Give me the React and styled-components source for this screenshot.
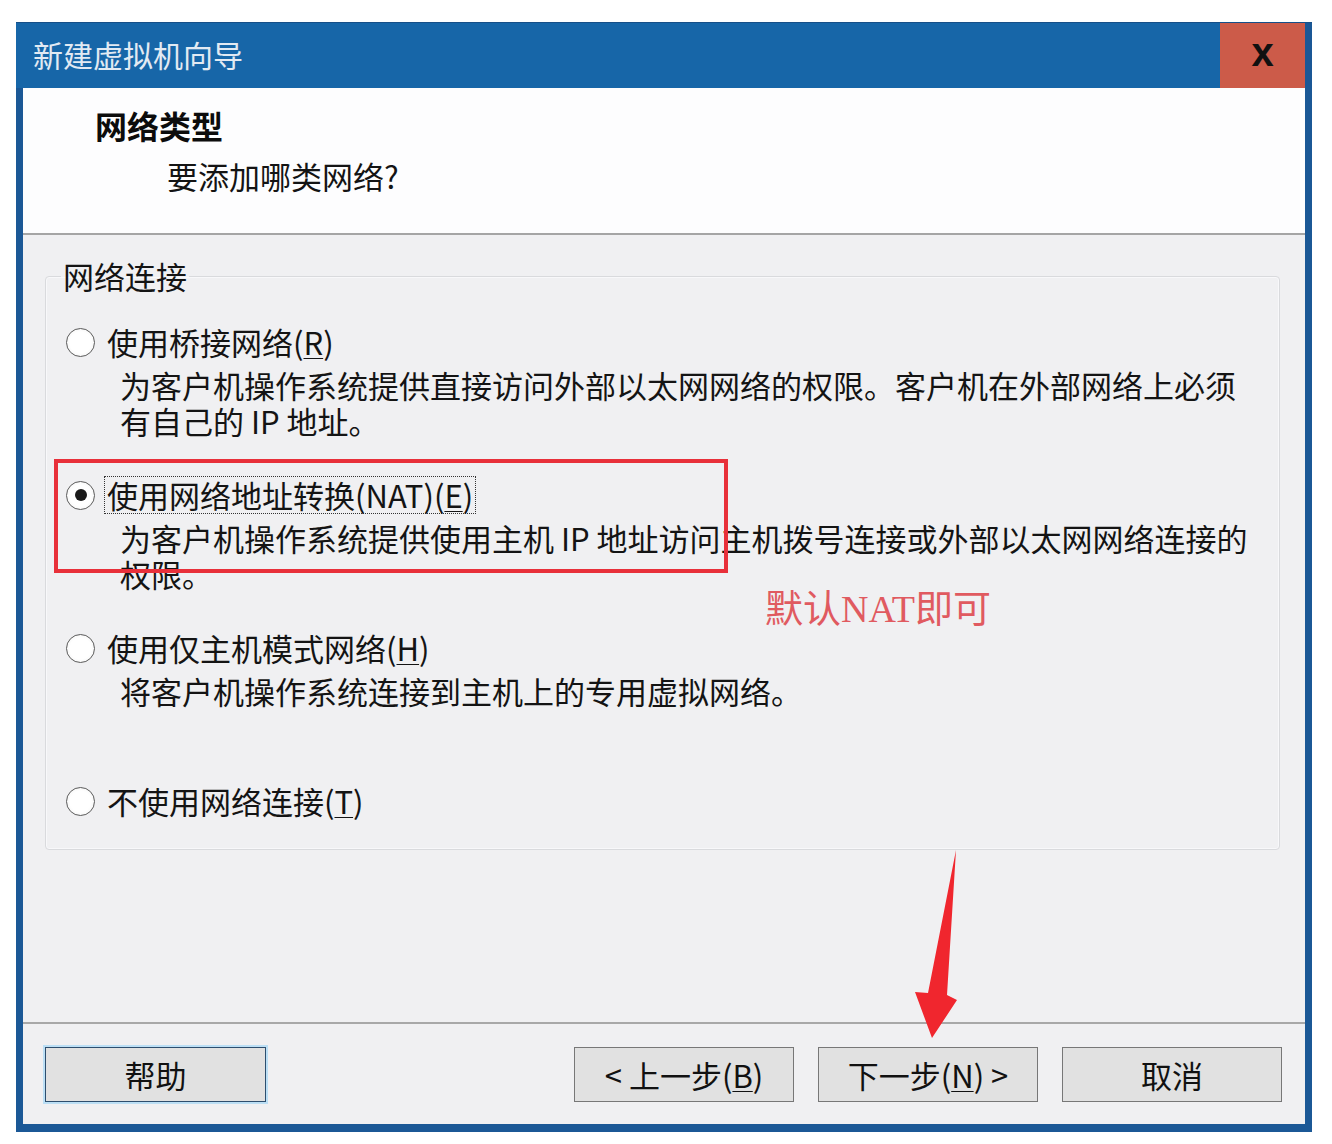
import { Fragment } from "react";
import styled, { createGlobalStyle } from "styled-components";

const GlobalStyle = createGlobalStyle`
  body {
    margin: 0;
    background: #ffffff;
    font-family: "Noto Sans CJK SC", "Microsoft YaHei", sans-serif;
    color: #141414;
  }
`;

const options = [
  {
    label: "使用桥接网络",
    key: "R",
    desc: ["为客户机操作系统提供直接访问外部以太网网络的权限。客户机在外部网络上必须", "有自己的 IP 地址。"],
  },
  {
    label: "使用网络地址转换(NAT)",
    key: "E",
    checked: true,
    desc: ["为客户机操作系统提供使用主机 IP 地址访问主机拨号连接或外部以太网网络连接的", "权限。"],
  },
  {
    label: "使用仅主机模式网络",
    key: "H",
    desc: ["将客户机操作系统连接到主机上的专用虚拟网络。"],
  },
  {
    label: "不使用网络连接",
    key: "T",
    last: true,
    desc: [],
  },
];

const App = () => {
  return (
    <Page>
      <GlobalStyle />
      <Window>
        <TitleBar>
          <Title>新建虚拟机向导</Title>
          <CloseButton>x</CloseButton>
        </TitleBar>

        <Client>
          <Header>
            <HeaderTitle>网络类型</HeaderTitle>
            <HeaderSub>要添加哪类网络?</HeaderSub>
          </Header>

          <Body>
            <Group>
              <Legend>网络连接</Legend>
              <OptionList>
                {options.map((o) => (
                  <Option key={o.key} $last={o.last}>
                    <Radio $checked={o.checked} />
                    <Label $focused={o.checked}>
                      {o.label}(<Key>{o.key}</Key>)
                    </Label>
                    {o.desc.length > 0 && (
                      <Desc>
                        {o.desc.map((line, i) => (
                          <Fragment key={line}>
                            {i > 0 && <br />}
                            {line}
                          </Fragment>
                        ))}
                      </Desc>
                    )}
                  </Option>
                ))}
              </OptionList>
            </Group>
          </Body>

          <Footer>
            <Button $focus>帮助</Button>
            <ButtonGroup>
              <Button>&lt; 上一步(<Key>B</Key>)</Button>
              <Button>下一步(<Key>N</Key>) &gt;</Button>
              <Button>取消</Button>
            </ButtonGroup>
          </Footer>
        </Client>

        <RedBox />
        <Note>
          默认<Latin>NAT</Latin>即可
        </Note>
        <Arrow width="52" height="195" viewBox="0 0 52 195">
          <polygon points="46,2 37,147 47,152 22,190 5,144 18,145" fill="#f0262e" />
        </Arrow>
      </Window>
    </Page>
  );
};

const Page = styled.div`
  height: 1144px;
  box-sizing: border-box;
  padding: 22px 20px 12px 16px;
`;

const Window = styled.div`
  position: relative;
  width: 1296px;
  height: 1110px;
  display: flex;
  flex-direction: column;
`;

const TitleBar = styled.div`
  height: 66px;
  box-sizing: border-box;
  display: flex;
  align-items: stretch;
  background: #1766a8;
  border-top: 1px solid #164f88;
  padding-right: 7px;
  box-shadow: inset -7px 0 0 #1a5796;
`;

const Title = styled.div`
  flex: 1;
  display: flex;
  align-items: center;
  padding-left: 17px;
  padding-bottom: 4px;
  color: #e2eaf3;
  font-size: 30px;
`;

const CloseButton = styled.div`
  width: 85px;
  display: flex;
  align-items: center;
  justify-content: center;
  background: #cc5b49;
  color: #111;
  font-family: "Liberation Sans", Arial, sans-serif;
  font-weight: 700;
  font-size: 40px;
  line-height: 1;
  padding-bottom: 8px;
  box-sizing: border-box;
`;

const Client = styled.div`
  flex: 1;
  display: flex;
  flex-direction: column;
  background: #f0f0f2;
  border: 0 solid #1b5896;
  border-width: 0 7px 8px 7px;
`;

const Header = styled.div`
  height: 147px;
  box-sizing: border-box;
  background: #fdfdfe;
  border-bottom: 2px solid #a5a5a5;
  padding: 17px 0 0 72px;
`;

const HeaderTitle = styled.div`
  font-size: 32px;
  font-weight: 700;
  line-height: 40px;
  color: #0c0c0c;
`;

const HeaderSub = styled.div`
  margin: 11px 0 0 72px;
  font-size: 31px;
  line-height: 40px;
`;

const Body = styled.div`
  flex: 1;
  padding: 23px 25px 0 22px;
`;

const Group = styled.fieldset`
  margin: 0;
  min-width: 0;
  border: 1px solid #d9dadd;
  border-radius: 4px;
  box-shadow: inset 0 0 0 1px #f8f8fa;
  padding: 0 16px 29px 20px;
`;

const Legend = styled.legend`
  font-size: 31px;
  line-height: 36px;
  padding: 0 2px;
  margin-left: -5px;
`;

const OptionList = styled.div`
  display: flex;
  flex-direction: column;
  gap: 37px;
  padding-top: 29px;
`;

const Option = styled.div`
  display: grid;
  grid-template-columns: 29px 1fr;
  column-gap: 9px;
  align-content: start;
  min-height: ${(p) => (p.$last ? "38px" : "116px")};
`;

const Radio = styled.span`
  grid-row: 1;
  grid-column: 1;
  align-self: center;
  width: 29px;
  height: 29px;
  box-sizing: border-box;
  border-radius: 50%;
  border: 1.5px solid #5b5b5b;
  background: radial-gradient(circle, #ffffff 55%, #ececec 100%);
  display: flex;
  align-items: center;
  justify-content: center;

  &::after {
    content: "";
    width: 12px;
    height: 12px;
    border-radius: 50%;
    background: #1a1a1a;
    display: ${(p) => (p.$checked ? "block" : "none")};
  }
`;

const Label = styled.span`
  grid-row: 1;
  grid-column: 2;
  justify-self: start;
  height: 38px;
  box-sizing: border-box;
  padding: 0 2px;
  border: 1px dotted ${(p) => (p.$focused ? "#333" : "transparent")};
  font-size: 31px;
  line-height: 35px;
  white-space: nowrap;
`;

const Key = styled.span`
  text-decoration: underline;
  text-decoration-thickness: 1px;
  text-underline-offset: 3px;
`;

const Desc = styled.div`
  grid-row: 2;
  grid-column: 2;
  margin: 6px 0 0 16px;
  font-size: 31px;
  line-height: 36px;
  white-space: nowrap;
`;

const Footer = styled.div`
  display: flex;
  align-items: flex-start;
  justify-content: space-between;
  border-top: 2px solid #a8a8a8;
  padding: 23px 23px 22px 22px;
`;

const ButtonGroup = styled.div`
  display: flex;
  gap: 24px;
`;

const Button = styled.div`
  width: ${(p) => (p.$focus ? "221px" : "220px")};
  height: 55px;
  box-sizing: border-box;
  display: flex;
  align-items: center;
  justify-content: center;
  background: #e1e1e1;
  border: 1px solid ${(p) => (p.$focus ? "#2d4e6e" : "#777")};
  box-shadow: ${(p) => (p.$focus ? "0 0 0 2px #bcdff5" : "none")};
  font-size: 31px;
  color: #111;
  white-space: nowrap;
`;

const RedBox = styled.div`
  position: absolute;
  left: 38px;
  top: 437px;
  width: 674px;
  height: 114px;
  box-sizing: border-box;
  border: 4px solid #e8303a;
  pointer-events: none;
`;

const Note = styled.div`
  position: absolute;
  left: 749px;
  top: 563px;
  font-size: 38px;
  line-height: 42px;
  color: #e05a60;
  white-space: nowrap;
`;

const Latin = styled.span`
  font-family: "Liberation Serif", "Times New Roman", serif;
`;

const Arrow = styled.svg`
  position: absolute;
  left: 894px;
  top: 826px;
`;

export default App;
